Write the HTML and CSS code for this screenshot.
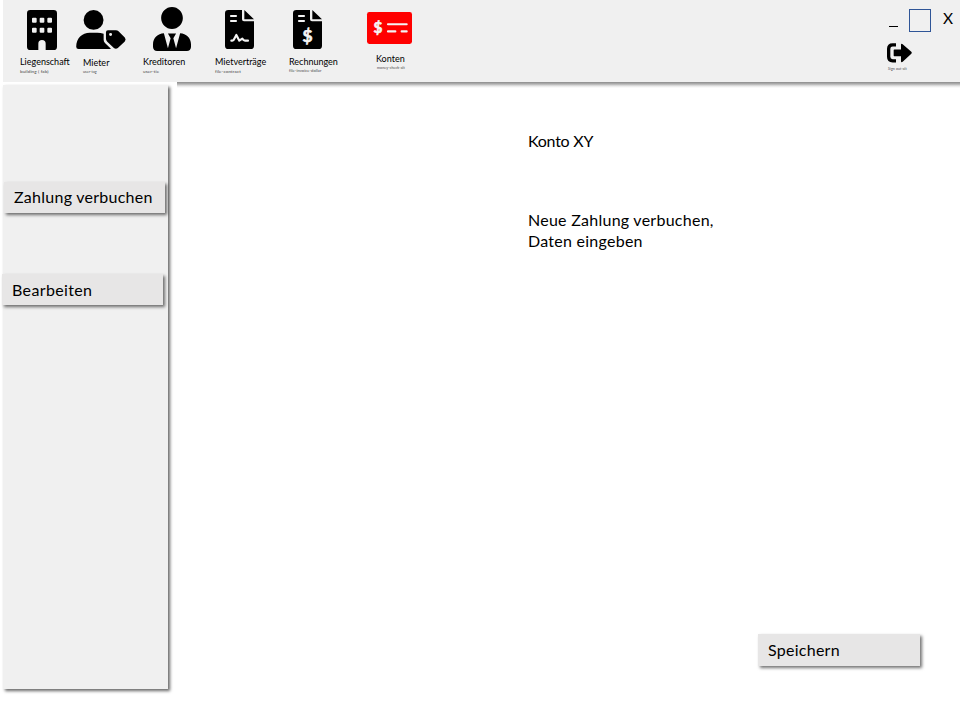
FILE: index.html
```html
<!DOCTYPE html>
<html lang="de">
<head>
<meta charset="utf-8">
<title>Konten</title>
<link rel="stylesheet" href="styles.css">
</head>
<body>
<div class="app">
  <header class="toolbar">
    <nav class="nav">
      <a class="item building">
        <svg class="icon" viewBox="0 0 90 120"><path fill-rule="evenodd" d="M10 0H80Q90 0 90 10V110Q90 120 80 120H56V101A11 11 0 0 0 34 101V120H10Q0 120 0 110V10Q0 0 10 0ZM18 23Q15 23 15 26V35Q15 38 18 38H26Q29 38 29 35V26Q29 23 26 23ZM41 23Q38 23 38 26V35Q38 38 41 38H49Q52 38 52 35V26Q52 23 49 23ZM64 23Q61 23 61 26V35Q61 38 64 38H72Q75 38 75 35V26Q75 23 72 23ZM18 53Q15 53 15 56V65Q15 68 18 68H26Q29 68 29 65V56Q29 53 26 53ZM41 53Q38 53 38 56V65Q38 68 41 68H49Q52 68 52 65V56Q52 53 49 53ZM64 53Q61 53 61 56V65Q61 68 64 68H72Q75 68 75 65V56Q75 53 72 53Z"/></svg>
        <span class="label">Liegenschaft</span><span class="hint">building ( fab)</span>
      </a>
      <a class="item tenant">
        <svg class="icon" viewBox="228 29 150 118"><circle cx="280.500" cy="59" r="30"/><path d="M228 140C228 115 246 98 269 98H292Q302 98 311 101V119Q311 125 315 129L333 146Q331 147 328 147H235Q228 147 228 140Z"/><path fill-rule="evenodd" d="M318 96Q318 90 324 90H348Q353 90 356 93L375 112Q380 118 375 124L354 144Q348 149 342 144L322 125Q318 121 318 116ZM332 98.500A4.500 4.500 0 1 0 332 107.500A4.500 4.500 0 1 0 332 98.500Z"/></svg>
        <span class="label">Mieter</span><span class="hint">user-tag</span>
      </a>
      <a class="item creditor">
        <svg class="icon" viewBox="0 0 448 512" preserveAspectRatio="none"><path d="M224 256c70.700 0 128-57.300 128-128S294.700 0 224 0 96 57.300 96 128s57.300 128 128 128zm95.800 48.600L272 480l-32-116 32-56h-96l32 56-32 116-47.800-175.400C56.900 308 0 360.300 0 432.400V464c0 26.500 21.500 48 48 48h352c26.500 0 48-21.500 48-48v-31.600c0-72.100-56.900-124.400-128.200-127.800z"/></svg>
        <span class="label">Kreditoren</span><span class="hint">user-tie</span>
      </a>
      <a class="item contract">
        <svg class="icon" viewBox="0 0 87 117"><path d="M10 0H51V28Q51 34 57 34H87V107Q87 117 77 117H10Q0 117 0 107V10Q0 0 10 0ZM58 0L87 28H58Z"/><path class="cut" d="M18 18H33M18 33H33M19 92H22Q26 92 28 86L34 75L43 92L52 86Q56 92 60 92H69"/></svg>
        <span class="label">Mietverträge</span><span class="hint">file-contract</span>
      </a>
      <a class="item invoice">
        <svg class="icon" viewBox="0 0 87 117"><path d="M10 0H51V28Q51 34 57 34H87V107Q87 117 77 117H10Q0 117 0 107V10Q0 0 10 0ZM58 0L87 28H58Z"/><path class="cut" d="M18 18H33M18 33H33"/><text class="dollar" x="43.500" y="95" font-size="52">$</text></svg>
        <span class="label">Rechnungen</span><span class="hint">file-invoice-dollar</span>
      </a>
      <a class="item account">
        <svg class="icon" viewBox="0 0 135 94" preserveAspectRatio="none"><rect width="135" height="94" rx="7" fill="#f00"/><path class="cut" d="M63 36H119M63 57H85M104 57H119"/><text class="dollar" x="33" y="61" font-size="46">$</text></svg>
        <span class="label">Konten</span><span class="hint">money-check-alt</span>
      </a>
    </nav>
    <div class="controls">
      <div class="window-buttons"><span class="minimize"></span><span class="maximize"></span><span class="close">X</span></div>
      <a class="signout">
        <svg class="icon" viewBox="81 128 75 59"><path fill="none" stroke="#000" stroke-width="10" d="M108 133H98Q86 133 86 145V169Q86 181 98 181H108"/><path d="M103 147H123V133Q123 128 128 131L154 154Q157 157 154 160L128 184Q123 187 123 182V167H103Q101 167 101 165V149Q101 147 103 147Z"/></svg>
        <span class="hint">Sign out-alt</span>
      </a>
    </div>
  </header>
  <div class="body">
    <aside class="sidebar">
      <button class="button book">Zahlung verbuchen</button>
      <button class="button edit">Bearbeiten</button>
    </aside>
    <main class="content">
      <h1 class="title">Konto XY</h1>
      <p class="message">Neue Zahlung verbuchen,<br>Daten eingeben</p>
      <button class="button save">Speichern</button>
    </main>
  </div>
</div>
</body>
</html>
```
FILE: styles.css
```css
* { box-sizing: border-box; }
body { margin: 0; background: #fff; color: #000; font: 16px/21px Lato, "Liberation Sans", sans-serif; letter-spacing: .26px; }
.app { height: 720px; display: flex; flex-direction: column; overflow: hidden; }
.toolbar { height: 82px; flex: none; margin-left: 3px; padding-left: 17px; background: #f0f0f0; display: flex; justify-content: space-between; letter-spacing: 0; }
.nav { display: grid; grid-template-columns: 56px 67px 72px 74px 78px 60px; }
.item { display: flex; flex-direction: column; align-items: flex-start; padding-top: 56px; position: relative; white-space: nowrap; }
.icon { display: block; overflow: visible; }
.item .icon { position: absolute; }
.label { font-size: 9px; line-height: 12px; }
.hint { font-size: 4.600px; line-height: 6px; color: #444; margin-top: 0; letter-spacing: .1px; }
.cut { fill: none; stroke: #f4f4f4; stroke-width: 6.500; stroke-linecap: round; stroke-linejoin: round; }
.dollar { fill: #f4f4f4; stroke: #f4f4f4; stroke-width: 2; font-weight: 700; text-anchor: middle; }
.building .icon { left: 7px; top: 10px; width: 30px; height: 40px; }
.tenant { padding: 57px 0 0 7px; }
.tenant .icon { left: 0; top: 10px; width: 50px; height: 39px; }
.tenant .hint { font-size: 3.600px; }
.creditor .icon { left: 10px; top: 7px; width: 38px; height: 44px; }
.contract .icon { left: 10px; top: 10px; width: 29px; height: 39px; }
.invoice .hint { font-size: 4px; }
.invoice .icon { left: 4px; top: 10px; width: 29px; height: 39px; }
.account { padding: 53px 0 0 9px; }
.account .icon { left: 0; top: 12px; width: 45px; height: 32px; }
.account .hint { margin: 0 0 0 1px; font-size: 3.600px; }
.controls { width: 76px; padding-top: 9px; }
.window-buttons { display: flex; height: 23px; padding-left: 5px; }
.minimize { width: 9px; height: 1px; margin: 17px 11px 0 0; background: #000; }
.maximize { width: 22px; height: 23px; border: 1px solid #2f5597; }
.close { margin: -1px 0 0 12px; font-size: 15.500px; }
.signout { display: block; margin: 11px 0 0 3px; }
.signout .icon { width: 25px; height: 20px; }
.signout .hint { display: block; font-size: 3.500px; margin: 3px 0 0 1px; }
.body { flex: 1; display: flex; }
.sidebar { width: 165px; height: 604px; margin: 3px 0 0 3px; background: #f0f0f0; box-shadow: 2px 2px 3px rgba(0,0,0,.6); flex: none; }
.button { display: block; border: 0; padding: 0 0 2px 10px; text-align: left; font: inherit; letter-spacing: inherit; color: inherit; background: #e7e6e6; box-shadow: 2px 2px 3px rgba(0,0,0,.55); white-space: nowrap; }
.book { width: 161px; height: 31px; margin: 97px 0 0 1px; }
.edit { width: 161px; height: 31px; margin: 61px 0 0 -1px; padding-bottom: 0; letter-spacing: .36px; }
.content { flex: 1; margin-left: 9px; padding: 48px 0 0 351px; background: linear-gradient(#8c8c8c, #b0b0b0 2px, #e6e6e6 4px, #fff 6px); }
.title { margin: 0; font: inherit; letter-spacing: -.25px; }
.message { margin: 58px 0 0; }
.save { width: 162px; height: 32px; margin: 383px 0 0 230px; }
```
